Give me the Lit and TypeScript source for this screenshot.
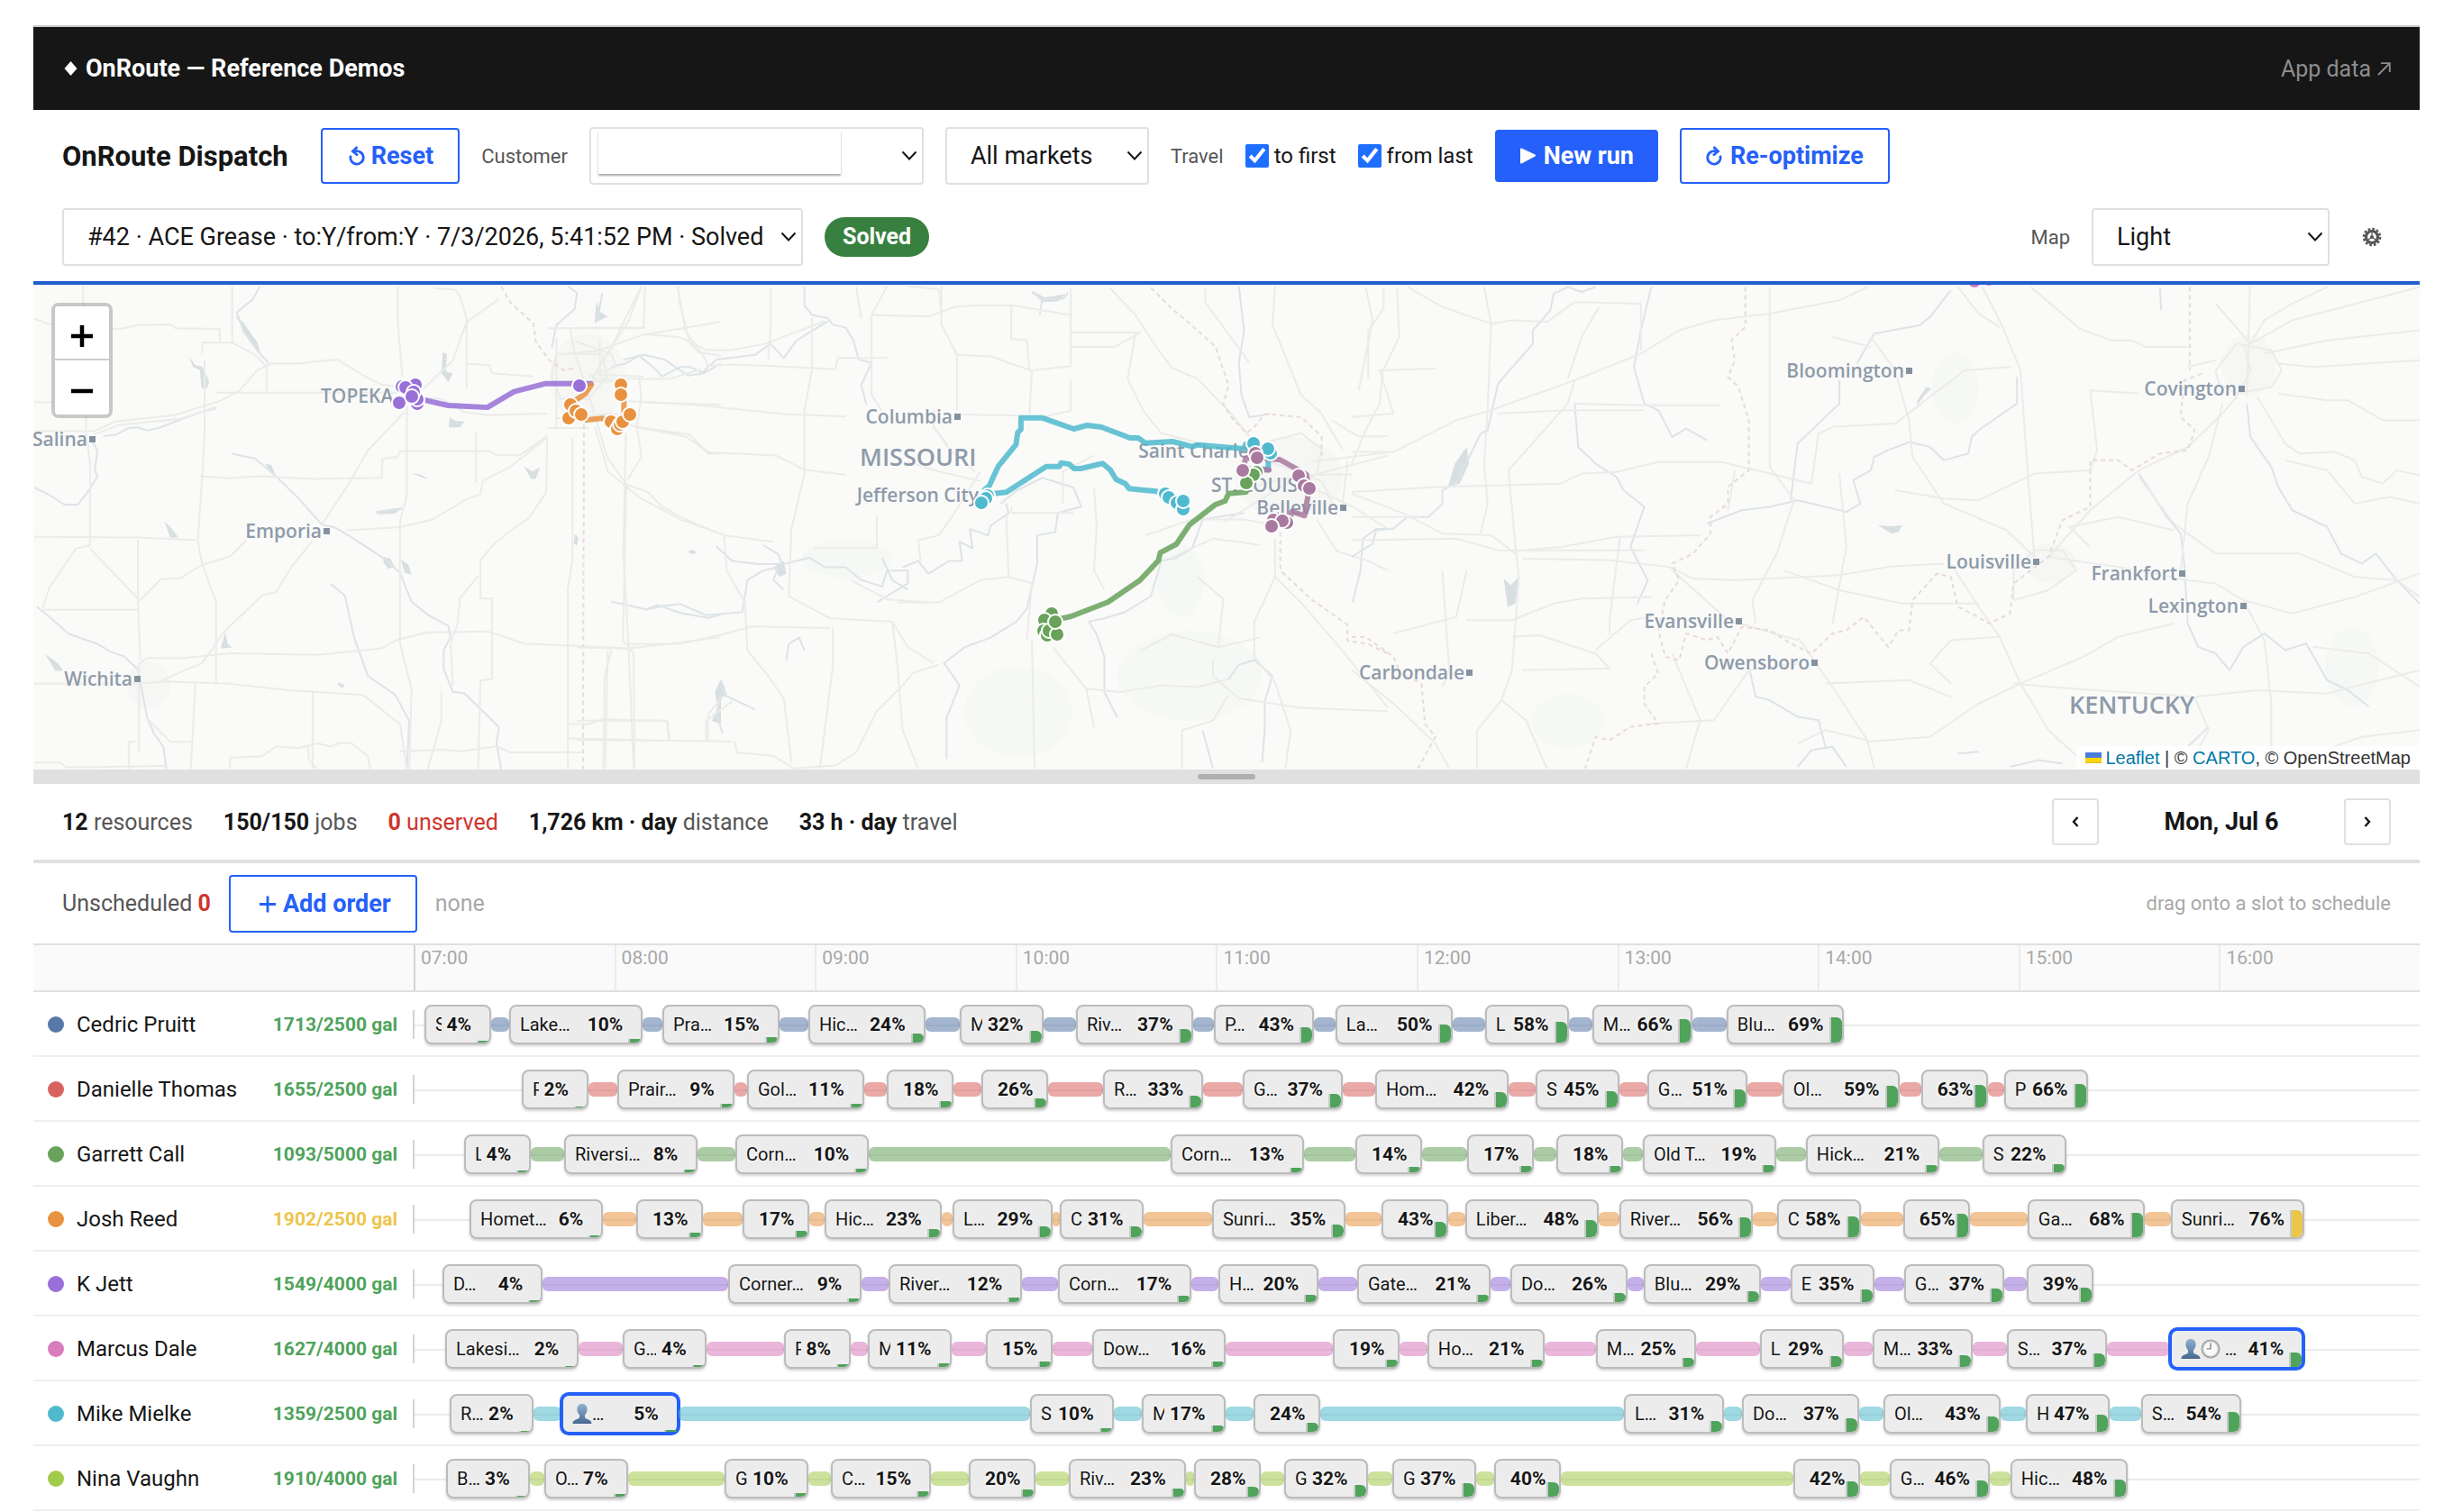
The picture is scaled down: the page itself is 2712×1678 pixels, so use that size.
import { LitElement, html, svg, css, nothing } from "lit";
import { customElement, property } from "lit/decorators.js";

/* ---------- schedule data ---------- */

/** A stop on the timeline: start (track units), minutes, label, tank fill %, optional badges. */
type Stop = [number, number, string, number, string?];

interface Resource {
  name: string;
  color: string;
  load: string;
  warn?: boolean;
  stops: Stop[];
}

/** Track width in units: ten hours of 222.5 units each. */
const TRACK = 2225;
const PER_MINUTE = TRACK / 600;

const RESOURCES: Resource[] = [
  {
    name: "Cedric Pruitt", color: "#5778a8", load: "1713/2500 gal",
    stops: [[11, 20, "S", 4], [105, 40, "Lake…", 10], [275, 35, "Pra…", 15], [437, 35, "Hic…", 24], [605, 25, "M", 32],
      [734, 35, "Riv…", 37], [887, 30, "P…", 43], [1022, 35, "La…", 50], [1188, 25, "L", 58], [1307, 30, "M…", 66], [1456, 35, "Blu…", 69]],
  },
  {
    name: "Danielle Thomas", color: "#d8625f", load: "1655/2500 gal",
    stops: [[119, 20, "P", 2], [225, 35, "Prair…", 9], [369, 35, "Gol…", 11], [524, 20, "", 18], [629, 20, "", 26],
      [764, 30, "R…", 33], [919, 30, "G…", 37], [1066, 40, "Hom…", 42], [1244, 25, "S", 45], [1368, 30, "G…", 51],
      [1518, 35, "Ol…", 59], [1672, 20, "", 63], [1764, 25, "P", 66]],
  },
  {
    name: "Garrett Call", color: "#68a25b", load: "1093/5000 gal",
    stops: [[55, 20, "L", 4], [166, 40, "Riversi…", 8], [356, 40, "Corn…", 10], [839, 40, "Corn…", 13], [1044, 20, "", 14],
      [1168, 20, "", 17], [1267, 20, "", 18], [1363, 40, "Old T…", 19], [1544, 40, "Hick…", 21], [1740, 25, "S", 22]],
  },
  {
    name: "Josh Reed", color: "#e8933f", load: "1902/2500 gal", warn: true,
    stops: [[61, 40, "Homet…", 6], [246, 20, "", 13], [364, 20, "", 17], [455, 35, "Hic…", 23], [597, 30, "L…", 29],
      [716, 25, "C", 31], [885, 40, "Sunri…", 35], [1073, 20, "", 43], [1166, 40, "Liber…", 48], [1337, 40, "River…", 56],
      [1512, 25, "C", 58], [1652, 20, "", 65], [1790, 35, "Ga…", 68], [1949, 40, "Sunri…", 76]],
  },
  {
    name: "K Jett", color: "#9870d8", load: "1549/4000 gal",
    stops: [[31, 30, "D…", 4], [348, 40, "Corner…", 9], [526, 40, "River…", 12], [714, 40, "Corn…", 17], [892, 30, "H…", 20],
      [1046, 40, "Gate…", 21], [1216, 35, "Do…", 26], [1364, 35, "Blu…", 29], [1527, 25, "E", 35], [1653, 30, "G…", 37], [1789, 20, "", 39]],
  },
  {
    name: "Marcus Dale", color: "#d97cbd", load: "1627/4000 gal",
    stops: [[34, 40, "Lakesi…", 2], [231, 25, "G…", 4], [410, 20, "P", 8], [503, 25, "M", 11], [634, 20, "", 15],
      [752, 40, "Dow…", 16], [1019, 20, "", 19], [1124, 35, "Ho…", 21], [1311, 30, "M…", 25], [1493, 25, "L", 29],
      [1618, 30, "M…", 33], [1767, 30, "S…", 37], [1948, 40, " …", 41, "person clock"]],
  },
  {
    name: "Mike Mielke", color: "#4fbace", load: "1359/2500 gal",
    stops: [[39, 25, "R…", 2], [163, 35, "…", 5, "person"], [683, 25, "S", 10], [807, 25, "M", 17], [931, 20, "", 24],
      [1342, 30, "L…", 31], [1473, 35, "Do…", 37], [1630, 35, "Ol…", 43], [1788, 25, "H", 47], [1916, 30, "S…", 54]],
  },
  {
    name: "Nina Vaughn", color: "#a2cb4b", load: "1910/4000 gal",
    stops: [[35, 25, "B…", 3], [144, 25, "O…", 7], [344, 25, "G", 10], [462, 30, "C…", 15], [615, 20, "", 20],
      [726, 35, "Riv…", 23], [865, 20, "", 28], [965, 25, "G", 32], [1085, 25, "G", 37], [1198, 20, "", 40],
      [1530, 20, "", 42], [1637, 30, "G…", 46], [1771, 35, "Hic…", 48]],
  },
];

const HOURS = ["07:00", "08:00", "09:00", "10:00", "11:00", "12:00", "13:00", "14:00", "15:00", "16:00"];

/* ---------- map data ---------- */

interface Tile { at: string; roads: string[]; rivers: string[]; borders: string[]; lakes: string[]; }

const TILES: Tile[] = [
  {
    at: "translate(0 300) scale(.5102 .3571)",
    roads: [
      "181,45 181,110", "187,455 187,505 196,600 196,855", "196,865 305,1028", "196,855 165,865 108,985 92,1050",
      "75,410 115,410", "245,182 270,180 300,170 370,168 382,180 478,182 478,222", "75,150 112,170",
      "75,500 205,500 250,470 380,450 480,405 520,375 560,310 590,290 650,290 690,282 735,278 800,335 830,355 870,362",
      "205,510 260,480 390,462 470,425", "470,380 870,380", "505,45 505,225 440,225 440,260", "505,225 555,262 580,300 580,375",
      "865,50 865,160 875,330", "885,420 885,700 870,780 870,1160 895,1300 890,1550",
      "880,440 800,560 760,660 700,790", "680,840 635,920 600,1000 570,1010 490,1120 440,1220 350,1275",
      "435,640 500,646 560,640 680,648 830,645 832,585 865,580 870,562 1065,562 1080,575 1130,575 1190,515",
      "755,808 870,798 940,775 1010,715 1045,695 1050,655 1110,610 1190,520",
      "1190,520 1188,690 1150,770 1110,810 1075,850 1045,900 1045,1020 1070,1020 1070,1270 1045,1275 1040,1550",
      "1245,520 1245,900 1235,990 1235,1550", "1300,480 1320,580 1362,665 1355,1150 1378,1190 1380,1550",
      "1362,665 1410,690 1440,735 1500,780 1568,820", "75,828 300,830 425,838", "300,838 300,1030 305,1210",
      "95,1055 300,1055", "75,1285 300,1285", "305,1025 350,960 390,958 440,915 500,890 535,840",
      "445,280 445,510 440,640 430,840 440,915 470,1030 470,1285", "300,1285 360,1278 500,1285 630,1305 790,1320 830,1365 870,1410 885,1550",
      "300,1225 320,1205 400,1205 500,1190 690,1195 830,1175 860,1150 930,1125 1060,1122 1140,1160 1370,1175 1430,1165 1568,1140",
      "75,1530 130,1530 145,1545 360,1540", "500,1550 500,1515 570,1510 600,1480 650,1485 690,1470 720,1480 740,1468 765,1470 800,1510 805,1550",
      "1235,1410 1280,1410 1310,1395 1450,1400 1455,1460", "1235,1455 1450,1462 1540,1462 1540,1380 1568,1330",
      "302,1225 302,1500", "295,1465 280,1465 280,1550", "325,1400 370,1465 415,1465", "425,1280 415,1550",
      "1395,50 1360,150 1330,240 1290,330", "1475,50 1478,100 1500,225 1520,255 1568,265", "1190,180 1400,180 1403,50",
      "1230,260 1300,250 1400,200 1568,160", "920,370 985,280 1015,160 1085,90", "1015,370 1015,150 1000,80 990,60 945,55",
      "1015,290 1065,295 1070,320 1160,330", "1300,325 1400,330", "1400,410 1568,418", "1330,470 1400,490 1500,510 1540,570 1568,570",
      "905,395 960,400 1010,440 1060,450 1190,445", "1210,260 1310,260 1320,330 1280,400 1220,400 1200,330 1210,260",
      "1240,180 1250,260 1270,340 1300,480", "1305,215 1305,330", "1200,345 1340,345", "1210,210 1210,490", "1190,490 1280,490",
      "1210,460 1330,445 1390,460", "1280,330 1340,300 1330,260 1250,220", "680,1310 680,1550", "670,1480 672,1520 690,1550",
      "1035,500 1035,660", "1040,950 1000,1020 995,1100 980,1160 985,1290", "960,1310 960,1400 930,1550", "1330,1180 1315,1260 1312,1550",
      "1390,330 1395,400 1385,480 1395,580 1365,650", "870,1495 960,1490 1000,1495 1080,1480 1110,1498 1265,1498",
    ],
    rivers: [
      "565,50 550,90 515,130 530,190 560,250 585,290", "225,515 250,512 280,490 300,488 320,498 345,490 400,460 440,440 470,430",
      "200,530 212,560 206,620 212,640 195,680 170,728 140,728 110,700 75,675",
      "505,570 555,585 600,640 650,710 700,790 730,800 770,835 840,900 870,940 895,1030 930,1070 975,1105 980,1140 965,1180 965,1240 985,1310 1010,1315 1050,1370 1085,1420 1080,1470 1090,1550",
      "720,975 750,1010 770,1140 800,1260 860,1320 890,1400 885,1550",
      "80,1045 110,1080 150,1130 210,1160 240,1185 270,1200 300,1240 320,1390 335,1440 355,1480 362,1550",
      "1210,170 1250,120 1255,70 1235,50", "1210,170 1200,240", "1310,70 1300,150",
      "1330,300 1360,290 1390,265 1420,300 1440,330 1480,300 1500,300 1530,320 1568,290",
      "1405,1055 1430,1040 1480,1065 1540,1080 1568,1070", "1330,1030 1410,1055", "820,755 850,745 875,740",
    ],
    borders: ["1090,50 1110,100 1160,165 1165,220 1195,280 1225,310 1250,305", "1270,480 1268,1550"],
    lakes: [
      "410,265 425,295 440,300 450,330 455,350 448,370 438,365 435,310 420,300", "963,255 972,260 970,315 985,320 975,348 960,318",
      "512,140 528,160 560,225 566,255 545,225", "358,780 372,800 388,830 370,830", "98,1192 125,1220 138,1245 120,1245",
      "978,458 990,468 1010,470 1000,488 976,488", "832,890 848,895 858,920 845,928 835,910", "872,898 888,915 895,945 880,940",
      "490,1125 495,1160 505,1172 480,1175", "1140,610 1158,625 1175,612 1165,648 1155,648", "895,630 915,635 932,648 920,645",
      "575,600 590,605 598,632 590,628", "735,1280 750,1290 745,1298 736,1290", "1250,820 1258,830 1255,855 1248,850",
      "1568,1270 1555,1310 1560,1360 1548,1400 1568,1410", "815,750 845,742 875,738 860,756 822,758", "1295,130 1310,140 1295,165",
    ],
  },
  {
    at: "translate(640 314) scale(.574 .3546)",
    roads: [
      "125,10 100,120 60,220 30,300", "195,10 210,150 245,230 255,260", "0,140 130,140", "130,160 200,170 250,210 300,210 365,190 430,150 480,120",
      "250,260 300,255 380,260 440,265 500,270 505,235 600,235", "375,15 375,140 370,240", "455,110 455,270 440,400 440,600 415,770 410,980",
      "100,370 220,380 400,410 520,418", "740,412 860,415", "735,400 735,225 705,130 705,10", "735,225 800,230 880,275 875,410",
      "600,10 570,100 570,350 590,400", "570,100 680,105 730,75 780,70 840,70 955,100 955,155 1090,155 1040,200 955,200",
      "840,70 840,175 870,180 875,275", "875,275 955,260 955,15", "955,300 955,400 900,420",
      "1030,15 1080,100 1120,200 1150,265 1200,300 1260,400 1300,480", "1080,160 1065,300 1095,400 1130,470 1200,500",
      "1215,15 1215,60 1300,250", "110,450 210,480 255,530 385,540 440,585 520,600", "35,450 60,590 120,670 200,740 285,790 380,810",
      "285,790 290,900 325,1000 330,1150 370,1230 400,1300 415,1500", "410,980 490,1050 610,1060 640,1140 690,1190",
      "95,470 90,850 100,1130 110,1520", "0,1140 100,1145", "100,1130 200,1130 280,1100 340,1075 490,1080", "60,1150 55,1520",
      "495,1080 495,1200 470,1520", "610,1060 620,1200 630,1400 660,1520", "415,1520 500,1510 540,1470 580,1340 630,1260 650,1220 700,1195",
      "780,590 730,720 700,790 660,805 665,870", "640,560 700,590 780,620", "690,400 690,450 720,520 770,590", "840,700 840,720 960,720",
      "830,720 835,920 780,930 700,1000 620,1000", "835,920 880,940 870,1120", "1000,640 1005,760 1000,900 1020,960",
      "1350,800 1350,920 1310,1060 1310,1170 1350,1250 1380,1400 1370,1520", "1350,920 1400,1000 1480,1150 1568,1330",
      "920,1140 985,1270 1000,1390", "880,1120 885,1520", "985,1270 1050,1280 1130,1260 1200,1265 1260,1240", "1230,1180 1230,1230 1280,1300 1400,1330 1568,1340",
      "1560,15 1560,80 1530,150 1530,300", "1350,10 1345,130 1400,350 1440,410 1480,520", "1250,750 1380,620 1568,540",
      "1420,640 1500,700 1568,770", "1420,560 1568,530", "1430,740 1470,840 1530,870 1568,900", "0,1370 175,1370 180,1435", "0,1430 300,1435",
      "250,1435 250,1370 300,1310", "305,1435 310,1470 380,1480 420,1520", "580,730 580,830 460,830", "530,930 600,990 680,1000",
      "940,690 940,590 1000,540", "1100,790 1190,740 1290,740 1360,760", "1340,560 1440,620 1470,720", "1300,640 1400,600 1500,600",
      "1380,640 1430,600 1440,520 1400,470 1330,500", "1200,920 1250,990 1240,1140", "1090,1150 1150,1100 1240,1140 1320,1110",
      "1170,1520 1170,1400 1230,1370 1260,1290", "1490,560 1480,700", "1320,820 1230,800 1150,860",
      "640,10 700,20 705,100", "550,110 540,10", "30,300 180,300 240,270", "1460,430 1510,480 1568,480",
    ],
    rivers: [
      "90,240 130,225 170,240 215,290 240,285 270,240 345,225 375,190 400,235 425,180 485,120",
      "440,10 440,70 455,100 485,110 495,130 520,140 535,180 545,240 570,250 550,320 560,380", "690,400 690,450 715,505",
      "270,825 300,870 350,880 400,880 450,860 480,890 520,890 550,930 590,950 600,900 640,900 640,940 600,980 580,1000",
      "360,820 390,850 400,900", "140,1020 170,1010 200,1005 250,1040 320,1030 330,930 360,900 390,890 380,930 400,960",
      "830,690 835,720 800,760 795,790 760,770 765,830 740,810 745,870 720,870 680,910 660,870 630,890",
      "820,690 850,650 900,610 960,640 975,700 930,720 925,780 890,790 890,880 870,1020 850,1060 800,1110 750,1140 710,1190 740,1260 715,1360 715,1490",
      "990,1060 1020,1050 1060,1030 1110,980 1130,870 1160,860 1190,830 1210,740 1290,720", "990,1060 1005,1100 1020,1170 1020,1280 1045,1360",
      "1280,10 1290,150 1280,250 1285,350 1300,420 1340,410", "1260,1240 1280,1195 1310,1180 1345,1230 1330,1310 1330,1400 1325,1500",
      "1568,770 1545,770 1520,800 1515,900 1500,1000", "1210,1400 1220,1460 1230,1520", "590,860 610,930 640,960",
      "280,1245 285,1290 345,1335", "280,1290 270,1350 282,1410", "405,1180 410,1130 430,1110 440,1150", "880,30 900,50 940,50 950,30",
      "900,50 895,100", "45,60 40,120", "980,580 1010,560",
    ],
    borders: [
      "1110,15 1150,80 1180,120 1235,200 1260,320 1250,380 1270,430 1295,470 1310,450 1330,410 1400,420 1440,480 1440,540",
      "1360,780 1360,900 1420,990 1490,1070 1490,1120 1530,1130 1568,1160",
    ],
    lakes: ["880,25 905,45 945,35 930,58 900,60", "278,1245 285,1260 290,1290 275,1300", "215,840 225,835 232,845 220,848", "38,60 45,90 60,105 35,125", "380,890 400,870 405,910 392,920"],
  },
  {
    at: "translate(1500 300) scale(.773 .3698)",
    roads: [
      "0,545 60,545 150,450 200,420 320,330 415,250 470,180 520,150 600,130 700,90 740,50", "320,330 310,400 225,600 235,830 240,920 230,1200",
      "310,325 330,200 355,110", "65,50 68,200 45,300 40,400 20,480 0,580", "190,50 200,160 195,420 190,580 195,700 185,790",
      "80,50 130,110 200,160 230,150 280,155 320,95 415,100 415,240", "0,665 130,650 300,640 330,610 380,605 440,575 530,575 600,610 660,640",
      "600,50 600,590 635,690 610,850 575,990 580,1060", "320,400 420,405 530,405", "0,670 75,730 130,790 200,795 235,850",
      "245,865 370,870 455,890 490,925 550,930 700,915 770,890 850,880", "245,840 300,830 380,800 500,795", "0,810 150,805 210,840 420,840",
      "460,900 540,1050 640,1110", "165,1050 230,1050 290,1000 330,985 430,980", "130,900 140,1200 130,1250", "230,1200 215,1290 180,1380 180,1495",
      "215,1290 250,1350 280,1495", "350,1140 400,1050 430,1040", "230,1100 270,1095 350,1150 370,1195 245,1200", "370,1095 370,1050 385,800",
      "640,1100 690,1250 740,1410 750,1495", "740,1415 830,1400 900,1300 960,1240 1050,1160 1100,1100 1180,1060",
      "960,1240 930,1100 900,1010 860,880", "950,990 1000,960 1040,900 1020,840 980,840 950,900 950,990", "980,860 970,600 960,300 930,150 905,50",
      "1000,860 1060,720 1130,600 1200,530 1250,430 1270,380 1290,300 1280,220", "975,50 1045,175 1090,210 1120,210 1140,230 1200,230",
      "870,50 900,130 930,170", "745,230 690,200", "745,200 780,300 800,450 805,560 850,700 940,780 980,860",
      "660,640 670,490 690,470 780,460 880,300 945,290", "780,660 850,685 900,690 980,610 1060,600", "1130,620 1180,760 1240,850",
      "1000,860 1100,890 1200,930 1240,940 1280,990 1350,1030 1440,980 1533,910", "1280,990 1310,1110 1320,1300 1320,1495",
      "1300,380 1340,520 1360,550 1410,545 1440,570 1450,620 1480,640 1500,600 1533,615", "1330,370 1400,390 1430,390 1480,450 1533,450",
      "1290,220 1310,150 1350,100 1400,50", "1290,220 1350,150 1533,50", "1310,250 1400,210 1533,180", "1240,100 1290,220", "1240,270 1200,290",
      "1240,300 1270,220 1320,240 1335,300 1320,350 1270,370 1245,340 1240,300", "1330,280 1380,290 1533,270", "1250,400 1230,560 1200,700 1190,900",
      "950,1240 1000,1250 1210,1280 1300,1260 1400,1270 1533,1200", "1533,700 1490,680 1440,700 1400,600 1340,570", "1380,1130 1460,1150 1533,1250",
      "0,1200 60,1300 120,1420 140,1495", "0,440 60,430 40,300 120,295", "1290,0 1285,380", "700,610 710,830 690,1060", "460,1150 500,1350 480,1495",
      "430,1360 520,1350 570,1200 640,1180", "1210,1280 1230,1380 1200,1495", "860,1240 830,1180 860,1110 930,1100", "1320,1495 1450,1400 1533,1380",
      "1060,600 1070,540 1060,360 1130,370", "1060,830 1030,770 1100,740 1180,780", "540,720 550,600", "60,1090 150,1040 165,900",
      "1533,980 1500,930 1440,920 1360,850 1240,850", "900,1000 790,1000 700,960 620,900", "680,1240 800,1230 860,1280",
      "1060,1495 1000,1380 960,1240", "640,1420 680,1380 740,1410", "20,50 30,150 10,360", "210,430 310,420 420,420", "0,740 100,740",
    ],
    rivers: [
      "350,50 330,65 310,50 290,70 285,120 260,180 260,220 210,340 195,480 185,490 150,640 130,660 130,700 110,740 80,740 60,775 35,780 30,820 0,860",
      "430,50 415,180 405,290 420,400 440,420 460,500 480,475 510,510", "320,400 325,530 350,580 380,620 390,660 420,710 400,830 425,930 410,1000",
      "860,60 830,140 815,165 750,190 725,280", "700,330 700,400 650,500 640,520 630,690",
      "955,320 955,400 900,480 890,500 885,550 850,570 830,530 800,515 770,540 750,560 745,600 720,630 730,700 710,725 680,710 640,690 600,710 560,720 510,760",
      "1285,400 1290,500 1320,590 1330,650 1350,720 1400,770 1420,850 1450,880 1470,850 1500,930 1533,1000",
      "1130,610 1170,740 1190,790 1195,880 1200,1060 1215,1130 1240,1150 1260,1200 1280,1130 1310,1090 1340,1140 1370,1120 1400,1230 1430,1260 1460,1310",
      "1160,50 1162,120", "570,1190 580,1280 600,1290 640,1340 670,1350 680,1430", "640,1490 660,1440 690,1430 710,1490", "945,1490 985,1470 1020,1480",
      "870,1450 900,1445", "1200,1430 1230,1370",
    ],
    borders: [
      "565,50 565,170 545,210 550,270 540,320 555,350 570,450 570,600 540,650 540,700 515,740 515,790 490,850 460,880 470,930 450,990 440,1080 450,1160 470,1170 480,1090 510,1110 525,1100 540,1150 560,1070 600,1080 630,1120 660,1150 690,1090 710,1080 735,1040 770,1130 785,1080 800,1080 805,990 840,910 860,920 870,1010 890,1030 915,1060 945,1030 950,940 1000,860 1020,750 1060,710 1060,570 1100,570 1120,600 1160,550 1200,540 1210,480 1190,440 1195,330 1220,310",
      "1203,50 1203,300", "0,1100 20,1100 60,1160 70,1210 100,1240 105,1360 120,1400 95,1495",
      "430,1150 440,1210 420,1250 420,1300 440,1360 400,1370 370,1410 350,1400 335,1495",
    ],
    lakes: ["165,530 168,580 155,640 138,650 148,580", "218,925 228,945 240,920 235,1000 224,1010", "812,390 825,350 832,355 822,375 812,405", "755,765 775,768 790,765 785,785 775,790"],
  },
];

/** Town labels: text, right edge of the text, baseline. A square dot follows each. */
const TOWNS: [string, number, number][] = [
  ["Salina", 97, 495], ["Emporia", 357, 597], ["Wichita", 147, 761], ["Columbia", 1057, 470], ["Belleville", 1485, 571],
  ["Bloomington", 2113, 419], ["Covington", 2482, 439], ["Louisville", 2254, 631], ["Frankfort", 2416, 644],
  ["Lexington", 2484, 680], ["Evansville", 1924, 697], ["Owensboro", 2008, 743], ["Carbondale", 1625, 754],
];

/** Route lines per vehicle, in route-layer coordinates. */
const ROUTES: { color: string; at: string; line: string }[] = [
  { color: "#9870d8", at: "translate(0 300) scale(.5102 .3571)", line: "896,391 920,402 975,420 1060,426 1118,377 1187,352 1285,352" },
  { color: "#e8923f", at: "translate(0 300) scale(.5102 .3571)", line: "1286,356 1272,385 1250,405 1240,418 1236,459 1264,447 1275,465 1310,460 1335,468 1342,493 1370,447 1357,440 1357,400 1350,386 1350,357" },
  { color: "#4fbace", at: "translate(900 420) scale(.3954 .3333)", line: "478,414 487,370 500,358 525,293 575,220 580,180 589,170 589,131 648,131 737,168 775,156 815,162 895,198 918,198 938,215 1015,210 1070,227 1085,221 1215,234 1220,218 1241,216" },
  { color: "#4fbace", at: "translate(900 420) scale(.3954 .3333)", line: "478,414 500,385 548,379 660,293 697,293 702,281 725,286 738,300 757,300 818,283 840,305 856,336 882,350 893,367 970,376 1003,396 1044,408 1044,434" },
  { color: "#4fbace", at: "translate(900 420) scale(.3954 .3333)", line: "1241,216 1283,234 1283,302 1250,302" },
  { color: "#68a25b", at: "translate(900 420) scale(.3954 .3333)", line: "1258,316 1225,330 1221,378 1172,383 1162,408 1135,420 1062,487 1025,552 980,580 975,606 923,672 833,745 730,792 690,803" },
  { color: "#a97a9f", at: "translate(900 420) scale(.3954 .3333)", line: "1285,305 1225,300 1211,306 1220,265 1251,264 1285,268 1315,270 1360,300 1390,320 1398,366 1385,457 1350,443 1340,478 1298,471 1292,492" },
];

const PINS: { color: string; at: [number, number][] }[] = [
  { color: "#9870d8", at: [[461, 427], [446, 429], [450, 430], [443, 447], [463, 448], [463, 443], [459, 435], [457, 440], [643, 428]] },
  { color: "#e8923f", at: [[689, 427], [689, 438], [678, 468], [685, 476], [688, 471], [691, 468], [699, 460], [633, 449], [631, 464], [639, 456], [645, 460]] },
  { color: "#4fbace", at: [[1096, 550], [1094, 553], [1089, 558], [1293, 548], [1297, 552], [1306, 558], [1313, 565], [1313, 556], [1410, 503], [1391, 492], [1407, 498]] },
  { color: "#68a25b", at: [[1394, 524], [1391, 527], [1383, 536], [1167, 681], [1159, 688], [1158, 700], [1162, 705], [1164, 700], [1173, 704], [1171, 690]] },
  { color: "#a97a9f", at: [[1393, 503], [1395, 508], [1379, 522], [1441, 528], [1447, 539], [1453, 542], [1428, 580], [1413, 577], [1423, 578], [1411, 584]] },
  { color: "#d97cbd", at: [[2191, 312], [2207, 310]] },
];

/* ---------- shared styles ---------- */

const base = css`
  * { box-sizing: border-box; }
  button, select, input { font: inherit; margin: 0; }
  a { color: inherit; text-decoration: none; }
`;

/* ---------- map ---------- */

@customElement("route-map")
export class RouteMap extends LitElement {
  static styles = [base, css`
    :host { display: block; position: relative; height: 538px; overflow: hidden; background: #fafaf8; }
    .canvas { display: block; width: 100%; height: 100%; }
    .road, .river, .border { fill: none; vector-effect: non-scaling-stroke; stroke-linejoin: round; }
    .road { stroke: #ebecea; stroke-width: 2; }
    .river { stroke: #dde4e7; stroke-width: 2; }
    .border { stroke: #ead9db; stroke-width: 2; stroke-dasharray: 5 4; }
    .lake { fill: #d8dfe1; }
    .wood { fill: #f6f8f5; }
    .urban { fill: #f6f6f5; }
    .route { fill: none; vector-effect: non-scaling-stroke; stroke-width: 6; stroke-linejoin: round; stroke-linecap: round; opacity: 0.85; }
    .pin { stroke: #fff; stroke-width: 2; }
    .town, .city, .state { font-family: "Open Sans", "Noto Sans", sans-serif; font-weight: 600; fill: #8e9baa; stroke: #fafaf8; stroke-width: 2; paint-order: stroke; }
    .town { font-size: 21px; text-anchor: end; }
    .city { font-size: 21px; }
    .state { font-size: 27px; }
    .dot { fill: #8492a0; }
    .zoom { position: absolute; left: 20px; top: 20px; display: flex; flex-direction: column; border: 4px solid rgba(0, 0, 0, 0.2); border-radius: 8px; background-clip: padding-box; }
    .zoom button { display: flex; align-items: center; justify-content: center; width: 60px; height: 60px; padding: 8px 0 0; border: 0; background: #fff; }
    .zoom button:first-child { border-bottom: 2px solid #ccc; border-radius: 4px 4px 0 0; }
    .zoom button:last-child { border-radius: 0 0 4px 4px; }
    .zoom svg { width: 26px; height: 26px; }
    .credit { position: absolute; right: 0; bottom: 0; display: flex; align-items: center; gap: 4px; height: 26px; padding: 0 10px; background: rgba(255, 255, 255, 0.8); color: #333; font: 20px/26px "Liberation Sans", Arial, sans-serif; white-space: nowrap; }
    .credit a { color: #0078a8; }
    .flag { width: 18px; height: 12px; }
  `];

  render() {
    return html`
      <svg class="canvas" viewBox="37 316 2648 538" preserveAspectRatio="xMidYMid slice" role="img" aria-label="Route map">
        <g class="wood">
          <ellipse cx="1320" cy="750" rx="80" ry="50"></ellipse>
          <ellipse cx="1130" cy="790" rx="60" ry="50"></ellipse>
          <ellipse cx="1310" cy="645" rx="26" ry="40"></ellipse>
          <ellipse cx="940" cy="620" rx="50" ry="22"></ellipse>
          <ellipse cx="2170" cy="430" rx="26" ry="40"></ellipse>
          <ellipse cx="1740" cy="800" rx="40" ry="30"></ellipse>
          <ellipse cx="2610" cy="740" rx="30" ry="44"></ellipse>
        </g>
        <g class="urban">
          <ellipse cx="652" cy="420" rx="42" ry="50"></ellipse>
          <ellipse cx="165" cy="760" rx="24" ry="26"></ellipse>
          <ellipse cx="1430" cy="530" rx="60" ry="45"></ellipse>
          <ellipse cx="2495" cy="405" rx="30" ry="34"></ellipse>
          <ellipse cx="2275" cy="625" rx="28" ry="22"></ellipse>
        </g>
        ${TILES.map((t) => svg`<g transform=${t.at}>
          ${t.lakes.map((p) => svg`<polygon class="lake" points=${p}></polygon>`)}
          ${t.rivers.map((p) => svg`<polyline class="river" points=${p}></polyline>`)}
          ${t.roads.map((p) => svg`<polyline class="road" points=${p}></polyline>`)}
          ${t.borders.map((p) => svg`<polyline class="border" points=${p}></polyline>`)}
        </g>`)}
        ${TOWNS.map(([name, x, y]) => svg`<text class="town" x=${x} y=${y}>${name}</text><rect class="dot" x=${x + 2} y=${y - 11} width="7" height="7"></rect>`)}
        <text class="city" x="356" y="447">TOPEKA</text>
        <text class="town" x="1086" y="557">Jefferson City</text>
        <text class="town" x="1396" y="508">Saint Charles</text>
        <text class="city" x="1344" y="546">ST. LOUIS</text>
        <text class="state" x="954" y="517">MISSOURI</text>
        <text class="state" x="2296" y="792">KENTUCKY</text>
        ${ROUTES.map((r) => svg`<g transform=${r.at}><polyline class="route" stroke=${r.color} points=${r.line}></polyline></g>`)}
        ${PINS.map((g) => g.at.map(([x, y]) => svg`<circle class="pin" fill=${g.color} cx=${x} cy=${y} r="8"></circle>`))}
      </svg>
      <div class="zoom">
        <button type="button" aria-label="Zoom in"><svg viewBox="0 0 26 26"><path d="M13 1v24M1 13h24" stroke="#000" stroke-width="4.5"></path></svg></button>
        <button type="button" aria-label="Zoom out"><svg viewBox="0 0 26 26"><path d="M1 13h24" stroke="#000" stroke-width="4.5"></path></svg></button>
      </div>
      <div class="credit">
        <svg class="flag" viewBox="0 0 12 8"><path fill="#4c7be1" d="M0 0h12v4H0z"></path><path fill="#ffd500" d="M0 4h12v3H0z"></path><path fill="#e0bc00" d="M0 7h12v1H0z"></path></svg>
        <span><a href="#leaflet">Leaflet</a> | © <a href="#carto">CARTO</a>, © OpenStreetMap</span>
      </div>`;
  }
}

/* ---------- timeline row ---------- */

@customElement("resource-row")
export class ResourceRow extends LitElement {
  @property({ attribute: false }) resource!: Resource;

  static styles = [base, css`
    :host { display: flex; align-items: center; height: 72px; padding-top: 2px; border-bottom: 2px solid #efefef; }
    .who { flex: none; display: flex; align-items: center; width: 423px; height: 32px; padding: 0 17px 0 16px; border-right: 2px solid #d3d3d3; }
    .swatch { flex: none; width: 18px; height: 18px; margin-right: 14px; border-radius: 50%; }
    .name { flex: 1; font-size: 24px; color: #161616; white-space: nowrap; }
    .load { font-size: 21px; font-weight: 700; color: #4fa35b; white-space: nowrap; }
    .load.warn { color: #ecc54b; }
    .track { flex: 1; display: flex; align-items: center; min-width: 0; height: 68px; background: linear-gradient(#ececec, #ececec) 0 34px / 100% 2px no-repeat; }
    .gap { flex: none; }
    .travel { flex: none; height: 16px; border-radius: 6px; opacity: 0.55; }
    .stop { flex: none; position: relative; display: flex; align-items: center; gap: 6px; height: 44px; padding: 0 20px 0 10px; border: 2px solid #bcbcbc; border-radius: 8px; background: #ececec; box-shadow: 0 2px 3px rgba(0, 0, 0, 0.18); color: #161616; font-size: 20px; text-align: left; text-shadow: 0 0 4px #fff; overflow: hidden; }
    .stop.picked { border-color: #2560fa; box-shadow: 0 0 0 2px #2560fa; overflow: visible; }
    .label { flex: 1; display: flex; align-items: center; min-width: 0; overflow: hidden; white-space: pre; }
    .pct { flex: none; font-size: 21px; font-weight: 700; }
    .gauge { position: absolute; right: 0; bottom: 0; width: 14px; border-left: 2px solid #c9c9c9; border-radius: 0 6px 6px 0; background: #4fa35b; background-clip: padding-box; }
    .gauge.warn { background-color: #ecc54b; }
    .badge { flex: none; width: 22px; height: 24px; }
  `];

  private badge(kind: string) {
    return kind === "person"
      ? html`<svg class="badge" viewBox="0 0 22 24" role="img" aria-label="Preferred driver">
          <defs><linearGradient id="bust" x1="0" y1="0" x2="0" y2="1"><stop offset="0" stop-color="#8fb2cf"></stop><stop offset="1" stop-color="#46678f"></stop></linearGradient></defs>
          <path fill="url(#bust)" d="M11 1c3.600 0 5.600 2.500 5.600 6 0 2.600-1 4.900-2.600 6.300v2.200c0 1 .6 1.600 1.800 2.100 3.200 1.300 5.500 2 5.700 5.400H.5c.2-3.400 2.500-4.100 5.700-5.400C7.400 17.100 8 16.500 8 15.500v-2.200C6.400 11.900 5.400 9.600 5.400 7c0-3.500 2-6 5.600-6z"></path>
        </svg>`
      : html`<svg class="badge" viewBox="0 0 22 24" role="img" aria-label="Time window">
          <circle cx="11" cy="12" r="9.500" fill="#fafafa" stroke="#a3a6aa" stroke-width="2"></circle>
          <circle cx="11" cy="12" r="7.800" fill="none" stroke="#d9dbdd" stroke-width="1"></circle>
          <path d="M11 5.500V12H6.500" fill="none" stroke="#6b6e72" stroke-width="1.200"></path>
        </svg>`;
  }

  render() {
    const { name, color, load, warn, stops } = this.resource;
    const share = (units: number) => `width:${((units / TRACK) * 100).toFixed(3)}%`;
    return html`
      <div class="who">
        <span class="swatch" style="background:${color}"></span>
        <span class="name">${name}</span>
        <span class="load ${warn ? "warn" : ""}">${load}</span>
      </div>
      <div class="track">
        ${stops.map(([start, minutes, label, fill, badges], i) => {
          const prev = stops[i - 1];
          const lead = prev ? start - prev[0] - prev[1] * PER_MINUTE : start;
          return html`
            ${prev
              ? html`<span class="travel" style="${share(lead)};background:${color}"></span>`
              : html`<span class="gap" style=${share(lead)}></span>`}
            <button type="button" class="stop ${badges ? "picked" : ""}" style=${share(minutes * PER_MINUTE)}>
              <span class="label">${badges ? badges.split(" ").map((b) => this.badge(b)) : nothing}${label}</span>
              <span class="pct">${fill}%</span>
              <span class="gauge ${fill > 75 ? "warn" : ""}" style="height:${fill}%"></span>
            </button>`;
        })}
      </div>`;
  }
}

/* ---------- page ---------- */

const chevron = html`<svg class="chevron" viewBox="0 0 18 12" aria-hidden="true"><path d="M1.500 1.500L9 9.500l7.500-8" fill="none" stroke="#161616" stroke-width="2"></path></svg>`;

@customElement("app-root")
export class AppRoot extends LitElement {
  static styles = [base, css`
    :host { display: block; padding: 28px 27px 0 37px; background: #fff; color: #161616; font-family: Roboto, "Noto Sans", sans-serif; font-size: 24px; }
    .top { display: flex; align-items: center; justify-content: space-between; height: 94px; padding: 0 32px 0 34px; border-top: 2px solid #c9cac9; background: #161616; color: #fff; }
    .brand { display: flex; align-items: center; gap: 9px; font-size: 27px; font-weight: 700; }
    .diamond { width: 15px; height: 16px; }
    .data { display: flex; align-items: center; gap: 7px; color: #8d8d8d; font-size: 25px; }
    .data svg { width: 15px; height: 15px; }
    .bar { display: flex; flex-direction: column; gap: 26px; padding: 19px 32px 17px; border-bottom: 4px solid #1f5fcc; }
    .line { display: flex; align-items: center; gap: 24px; height: 64px; }
    .title { margin: 0 12px 0 0; font-size: 31px; font-weight: 700; white-space: nowrap; }
    .muted { color: #565656; font-size: 22px; }
    .btn { display: flex; align-items: center; gap: 7px; height: 62px; padding: 0 27px; border: 2px solid #2560fa; border-radius: 4px; background: #fff; color: #2560fa; font-size: 27px; font-weight: 700; white-space: nowrap; }
    .btn.solid { height: 58px; padding: 0 25px; background: #2560fa; color: #fff; }
    .btn.tall { height: 64px; padding: 0 27px 0 31px; }
    .btn svg { width: 20px; height: 26px; }
    .pick { position: relative; display: flex; }
    .pick select { height: 64px; padding: 0 36px 0 26px; border: 2px solid #e0e0e0; border-radius: 4px; background: #fff; color: #161616; font-size: 27px; appearance: none; }
    .pick.customer select { width: 371px; }
    .pick.market select { width: 226px; }
    .pick.run select { width: 822px; }
    .pick.style select { width: 264px; }
    .chevron { position: absolute; right: 7px; top: 26px; width: 18px; height: 12px; pointer-events: none; }
    .cover { position: absolute; left: 10px; top: 4px; width: 269px; height: 48px; background: #fff; box-shadow: 0 2px 2px rgba(0, 0, 0, 0.35); pointer-events: none; }
    .check { display: flex; align-items: center; gap: 6px; font-size: 24px; white-space: nowrap; }
    .check input { width: 26px; height: 26px; accent-color: #1f6fff; }
    .checks { display: flex; align-items: center; gap: 24px; }
    .pill { padding: 0 20px; border-radius: 22px; background: #37803f; color: #fff; font-size: 25px; font-weight: 700; line-height: 44px; }
    .right { display: flex; align-items: center; gap: 24px; margin-left: auto; }
    .gear { display: flex; padding: 0 10px 0 12px; border: 0; background: none; }
    .gear svg { width: 22px; height: 22px; }
    .grip { display: flex; justify-content: center; align-items: center; height: 16px; background: #e0e0e0; }
    .grip span { width: 64px; height: 6px; border-radius: 3px; background: #b0b0b0; }
    .stats { display: flex; align-items: center; gap: 34px; height: 88px; padding: 0 32px; border-bottom: 4px solid #e0e0e0; color: #565656; font-size: 25px; }
    .stats b { color: #161616; font-weight: 700; }
    .stats .bad, .stats .bad b, .count { color: #d0342c; }
    .days { display: flex; align-items: center; margin-left: auto; }
    .days button { display: flex; align-items: center; justify-content: center; width: 52px; height: 52px; padding: 0; border: 2px solid #e0e0e0; border-radius: 4px; background: #fff; }
    .days svg { width: 8px; height: 12px; }
    .day { width: 272px; text-align: center; color: #161616; font-size: 27px; font-weight: 700; }
    .backlog { display: flex; align-items: center; height: 89px; padding: 0 32px; color: #565656; font-size: 25px; }
    .backlog .btn { margin: 0 20px; }
    .count { font-weight: 700; }
    .faint { color: #a8a8a8; }
    .hint { margin-left: auto; color: #a8a8a8; font-size: 22px; }
    .hours { display: grid; grid-template-columns: 422px repeat(10, 1fr); height: 54px; border: solid #e0e0e0; border-width: 2px 0; background: #fafafa; color: #a8a8a8; font-size: 21px; line-height: 28px; }
    .hours span { padding-left: 6px; border-left: 2px solid #ebebeb; }
    .hours span:first-child { border: 0; }
    .hours .first { border-color: #d3d3d3; }
  `];

  render() {
    return html`
      <header class="top">
        <span class="brand"><svg class="diamond" viewBox="0 0 14 16"><path fill="#fff" d="M7 0l7 8-7 8-7-8z"></path></svg>OnRoute — Reference Demos</span>
        <a class="data" href="#data">App data <svg viewBox="0 0 15 15"><path d="M1 14L13.500 1.500M4 1.200h9.800V11" fill="none" stroke="#8d8d8d" stroke-width="1.800"></path></svg></a>
      </header>

      <section class="bar">
        <div class="line">
          <h1 class="title">OnRoute Dispatch</h1>
          <button type="button" class="btn"><svg viewBox="0 0 20 26"><path d="M9 8A7.200 7.200 0 1 1 4.200 12.600M11.500 3L6.500 8l5.500 4.500" fill="none" stroke="#2560fa" stroke-width="2.800"></path></svg>Reset</button>
          <label class="muted" for="customer">Customer</label>
          <span class="pick customer"><select id="customer"><option></option></select><span class="cover"></span>${chevron}</span>
          <span class="pick market"><select aria-label="Market"><option>All markets</option></select>${chevron}</span>
          <span class="muted">Travel</span>
          <span class="checks">
            <label class="check"><input type="checkbox" .checked=${true}>to first</label>
            <label class="check"><input type="checkbox" .checked=${true}>from last</label>
          </span>
          <button type="button" class="btn solid"><svg viewBox="0 0 20 26"><path fill="#fff" stroke="#fff" stroke-width="2" stroke-linejoin="round" d="M2 5.500l15 7-15 8z"></path></svg>New run</button>
          <button type="button" class="btn"><svg viewBox="0 0 20 26"><path d="M11 8A7.200 7.200 0 1 0 15.800 12.600M8.500 3l5 5-5.500 4.500" fill="none" stroke="#2560fa" stroke-width="2.800"></path></svg>Re-optimize</button>
        </div>
        <div class="line">
          <span class="pick run"><select aria-label="Run"><option>#42 · ACE Grease · to:Y/from:Y · 7/3/2026, 5:41:52 PM · Solved</option></select>${chevron}</span>
          <span class="pill">Solved</span>
          <span class="right">
            <label class="muted" for="mapstyle">Map</label>
            <span class="pick style"><select id="mapstyle"><option>Light</option></select>${chevron}</span>
            <button type="button" class="gear" aria-label="Settings"><svg viewBox="0 0 22 22"><circle cx="11" cy="11" r="6.500" fill="none" stroke="#565656" stroke-width="3.200"></circle><circle cx="11" cy="11" r="2" fill="#565656"></circle><path d="M11 11V6M11 11l4 3M11 11l-4 3" stroke="#565656" stroke-width="1.200"></path><circle cx="11" cy="11" r="9" fill="none" stroke="#565656" stroke-width="2.600" stroke-dasharray="2.700 2.012"></circle></svg></button>
          </span>
        </div>
      </section>

      <route-map></route-map>
      <div class="grip"><span></span></div>

      <section class="stats">
        <span><b>12</b> resources</span>
        <span><b>150/150</b> jobs</span>
        <span class="bad"><b>0</b> unserved</span>
        <span><b>1,726 km · day</b> distance</span>
        <span><b>33 h · day</b> travel</span>
        <div class="days">
          <button type="button" aria-label="Previous day"><svg viewBox="0 0 8 12"><path d="M6.500 1L2 6l4.500 5" fill="none" stroke="#161616" stroke-width="2.400"></path></svg></button>
          <span class="day">Mon, Jul 6</span>
          <button type="button" aria-label="Next day"><svg viewBox="0 0 8 12"><path d="M1.500 1L6 6l-4.500 5" fill="none" stroke="#161616" stroke-width="2.400"></path></svg></button>
        </div>
      </section>

      <section class="backlog">
        <span>Unscheduled <span class="count">0</span></span>
        <button type="button" class="btn tall"><svg viewBox="0 0 20 26"><path d="M10 4.500v18M1 13.500h18" stroke="#2560fa" stroke-width="2.800"></path></svg>Add order</button>
        <span class="faint">none</span>
        <span class="hint">drag onto a slot to schedule</span>
      </section>

      <section>
        <div class="hours"><span></span>${HOURS.map((h, i) => html`<span class=${i ? "" : "first"}>${h}</span>`)}</div>
        ${RESOURCES.map((r) => html`<resource-row .resource=${r}></resource-row>`)}
      </section>`;
  }
}
